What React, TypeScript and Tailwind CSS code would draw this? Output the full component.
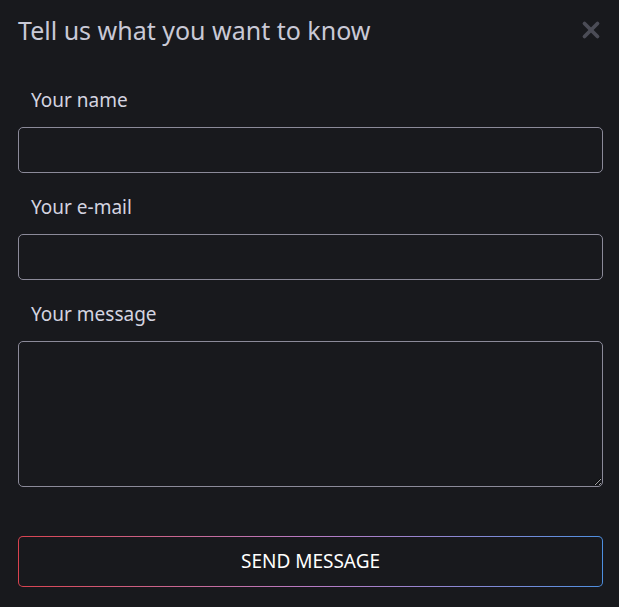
import { X } from 'lucide-react';

const Field = ({ label, tall }: { label: string; tall?: boolean }) => {
  return (
    <div className="flex flex-col">
      <label className="pl-[13px] text-[19px] leading-[26px] text-[#d4d4e0]">{label}</label>
      {tall ? (
        <textarea className="mt-[14px] h-[146px] w-full rounded-[5px] border border-[#8b8a99] bg-transparent" />
      ) : (
        <input className="mt-[14px] h-[46px] w-full rounded-[5px] border border-[#8b8a99] bg-transparent" />
      )}
    </div>
  );
};

export default function App() {
  return (
    <div
      className="min-h-[607px] w-full bg-[#18191d] pl-[18px] pr-[16px] pt-[14px]"
      style={{ fontFamily: '"Noto Sans", sans-serif' }}
    >
      <div className="flex items-start justify-between">
        <h2 className="text-[25px] leading-[32px] text-[#c9c9d6]">Tell us what you want to know</h2>
        <X className="mr-[-1px] mt-[3px] h-[26px] w-[26px] text-[#4b4c56]" strokeWidth={3.5} />
      </div>
      <div className="mt-[41px] flex flex-col gap-[21px]">
        <Field label="Your name" />
        <Field label="Your e-mail" />
        <Field label="Your message" tall />
      </div>
      <div className="mt-[49px] rounded-[5px] bg-gradient-to-r from-[#d9424f] via-[#b77ac4] to-[#4d8fe0] p-px">
        <button className="flex h-[49px] w-full items-center justify-center rounded-[4px] bg-[#18191d] text-[19px] text-white">
          SEND MESSAGE
        </button>
      </div>
    </div>
  );
}
